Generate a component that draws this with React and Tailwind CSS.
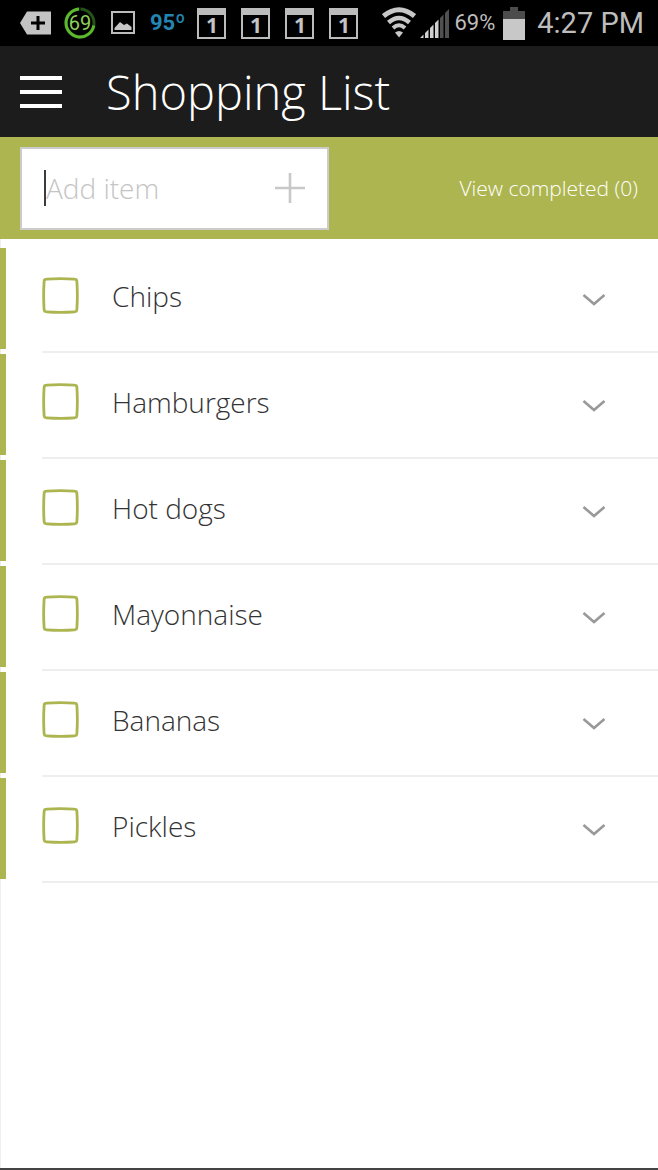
import { useState } from "react";

const initialItems = ["Chips", "Hamburgers", "Hot dogs", "Mayonnaise", "Bananas", "Pickles"];

function CalendarIcon() {
  return (
    <div className="grid h-8 w-8 place-items-center">
      <svg className="col-start-1 row-start-1" width="32" height="32" viewBox="0 0 32 32" aria-hidden="true">
        <rect x="2" y="2" width="27" height="29" fill="none" stroke="#bcbcbc" strokeWidth="2" />
        <rect x="1" y="1" width="29" height="7" fill="#bcbcbc" />
      </svg>
      <span className="col-start-1 row-start-1 pt-1 font-['Open_Sans',sans-serif] text-[21px] leading-6 font-bold text-[#c4c4c4]">1</span>
    </div>
  );
}

function StatusBar() {
  return (
    <div className="flex h-[46px] items-center justify-between bg-black pr-[14px] pl-5 font-['Roboto',sans-serif]">
      <div className="flex items-center gap-3">
        <svg width="32" height="24" viewBox="0 0 32 24" aria-hidden="true">
          <path d="M0 12 7 0.5H31V23.5H7Z" fill="#c3c3c3" />
          <path d="M18 5V19M11 12H25" stroke="#000" strokeWidth="3" />
        </svg>
        <div className="grid h-8 w-8 place-items-center">
          <svg className="col-start-1 row-start-1" width="32" height="32" viewBox="0 0 32 32" fill="none" strokeWidth="3" aria-hidden="true">
            <circle cx="16" cy="16" r="14" stroke="#24521a" />
            <path d="M29.8 18.5A14 14 0 1 1 15 2" stroke="#5cb82c" />
            <path d="M16 0V4" stroke="#000" strokeWidth="1" />
          </svg>
          <span className="col-start-1 row-start-1 text-xl leading-5 text-[#8ed058]">69</span>
        </div>
        <svg width="30" height="24" viewBox="0 0 30 24" aria-hidden="true">
          <rect x="4" y="1" width="22" height="21" fill="none" stroke="#bcbcbc" strokeWidth="2" />
          <path d="M6.500 19V17L12 11L16 14L19 12.500L23.500 16V19Z" fill="#c6c6c6" />
        </svg>
        <span className="w-[34px] text-[22px] leading-8 font-bold text-[#2385b2]">95º</span>
        <CalendarIcon />
        <CalendarIcon />
        <CalendarIcon />
        <CalendarIcon />
      </div>
      <div className="flex items-center gap-1 text-[#bdbdbd]">
        <svg width="34" height="32" viewBox="0 0 34 32" fill="none" stroke="#c8c8c8" aria-hidden="true">
          <path d="M1.500 9Q17 -3.500 32.500 9" strokeWidth="5" />
          <path d="M6.500 15.500Q17 6.500 27.500 15.500" strokeWidth="4.500" />
          <path d="M11 21Q17 15.500 23 21" strokeWidth="4" />
          <path d="M13 25.500Q17 22.500 21 25.500L17 30.500Z" fill="#c8c8c8" stroke="none" />
        </svg>
        <svg width="30" height="32" viewBox="0 0 30 32" aria-hidden="true">
          <path d="M0 31 3.500 27.500V31ZM5 31V26L8.500 22.500V31ZM10 31V21L13.500 17.500V31ZM15 31V16L18.500 12.500V31Z" fill="#d0d0d0" />
          <path d="M20 31V11L23.500 7.500V31ZM25 31V6L29 2V31Z" fill="#505050" />
        </svg>
        <span className="pr-1 text-[22px] leading-8">69%</span>
        <svg width="22" height="33" viewBox="0 0 22 33" aria-hidden="true">
          <path d="M0 4H7V0H15V4H22V12H0Z" fill="#4c4c4c" />
          <path d="M0 12H22V33H0Z" fill="#c8c8c8" />
        </svg>
        <span className="pl-2 text-[29px] leading-8">4:27 PM</span>
      </div>
    </div>
  );
}

function ListItem({ name }) {
  const [checked, setChecked] = useState(false);
  return (
    <li className="flex h-[106px] pt-px">
      <span className="h-[101px] w-[6px] shrink-0 bg-[#adb550]" />
      <div className="ml-9 flex grow items-center border-b-2 border-[#eeeeee] pr-[52px]">
        <label className="flex grow items-center gap-[33px] pb-2 text-[28px] leading-9 font-light text-[#333333]">
          <span className="grid">
            <input
              type="checkbox"
              checked={checked}
              onChange={() => setChecked(!checked)}
              className="col-start-1 row-start-1 size-[37px] appearance-none"
            />
            <svg className="pointer-events-none col-start-1 row-start-1" width="37" height="37" viewBox="0 0 37 37" fill="none" stroke="#adb550" strokeWidth="2.800" aria-hidden="true">
              <path d="M4.500 2.200Q18.500 1.200 32.500 2.200Q34.800 2.300 34.900 4.500Q35.800 18.500 34.900 32.500Q34.800 34.700 32.500 34.800Q18.500 35.800 4.500 34.800Q2.200 34.700 2.100 32.500Q1.200 18.500 2.100 4.500Q2.200 2.300 4.500 2.200Z" />
              {checked && <path d="M9 19 16 26 28 11" />}
            </svg>
          </span>
          <span>{name}</span>
        </label>
        <button type="button" aria-label={`Show options for ${name}`} className="pt-px">
          <svg width="24" height="14" viewBox="0 0 24 14" fill="none" stroke="#999999" strokeWidth="2.600" aria-hidden="true">
            <path d="M1.500 2 12 11 22.500 2" />
          </svg>
        </button>
      </div>
    </li>
  );
}

export default function App() {
  return (
    <div className="flex min-h-screen flex-col border-b-2 border-[#444444] bg-white font-['Open_Sans','Noto_Sans',sans-serif]">
      <StatusBar />
      <header className="flex h-[91px] items-center gap-11 bg-[#1c1c1c] px-5 pt-px text-white">
        <button type="button" aria-label="Open menu">
          <svg width="42" height="32" viewBox="0 0 42 32" fill="#fff" aria-hidden="true">
            <path d="M0 0H42V4H0ZM0 14H42V18H0ZM0 28H42V32H0Z" />
          </svg>
        </button>
        <h1 className="text-[47px] leading-[56px] font-light">Shopping List</h1>
      </header>
      <div className="flex h-[102px] items-center justify-between bg-[#adb550] px-5">
        <form className="flex h-[83px] w-[309px] items-center border-2 border-[#cccccc] bg-white px-[22px]" onSubmit={(e) => e.preventDefault()}>
          <span className="h-9 w-[2px] shrink-0 bg-[#3c3c3c]" />
          <input
            type="text"
            aria-label="Add item"
            placeholder="Add item"
            className="min-w-0 grow text-[28px] font-light text-[#3c3c3c] caret-transparent outline-none placeholder:text-[#c4c4c4]"
          />
          <button type="submit" aria-label="Add">
            <svg width="30" height="30" viewBox="0 0 30 30" stroke="#c8c8c8" strokeWidth="2.600" aria-hidden="true">
              <path d="M15 0V30M0 15H30" />
            </svg>
          </button>
        </form>
        <a href="#completed" className="text-[21px] leading-8 font-light text-white">View completed (0)</a>
      </div>
      <main className="grow pt-2 shadow-[inset_1px_0_0_#eeeeee]">
        <ul>
          {initialItems.map((name) => (
            <ListItem key={name} name={name} />
          ))}
        </ul>
      </main>
    </div>
  );
}
